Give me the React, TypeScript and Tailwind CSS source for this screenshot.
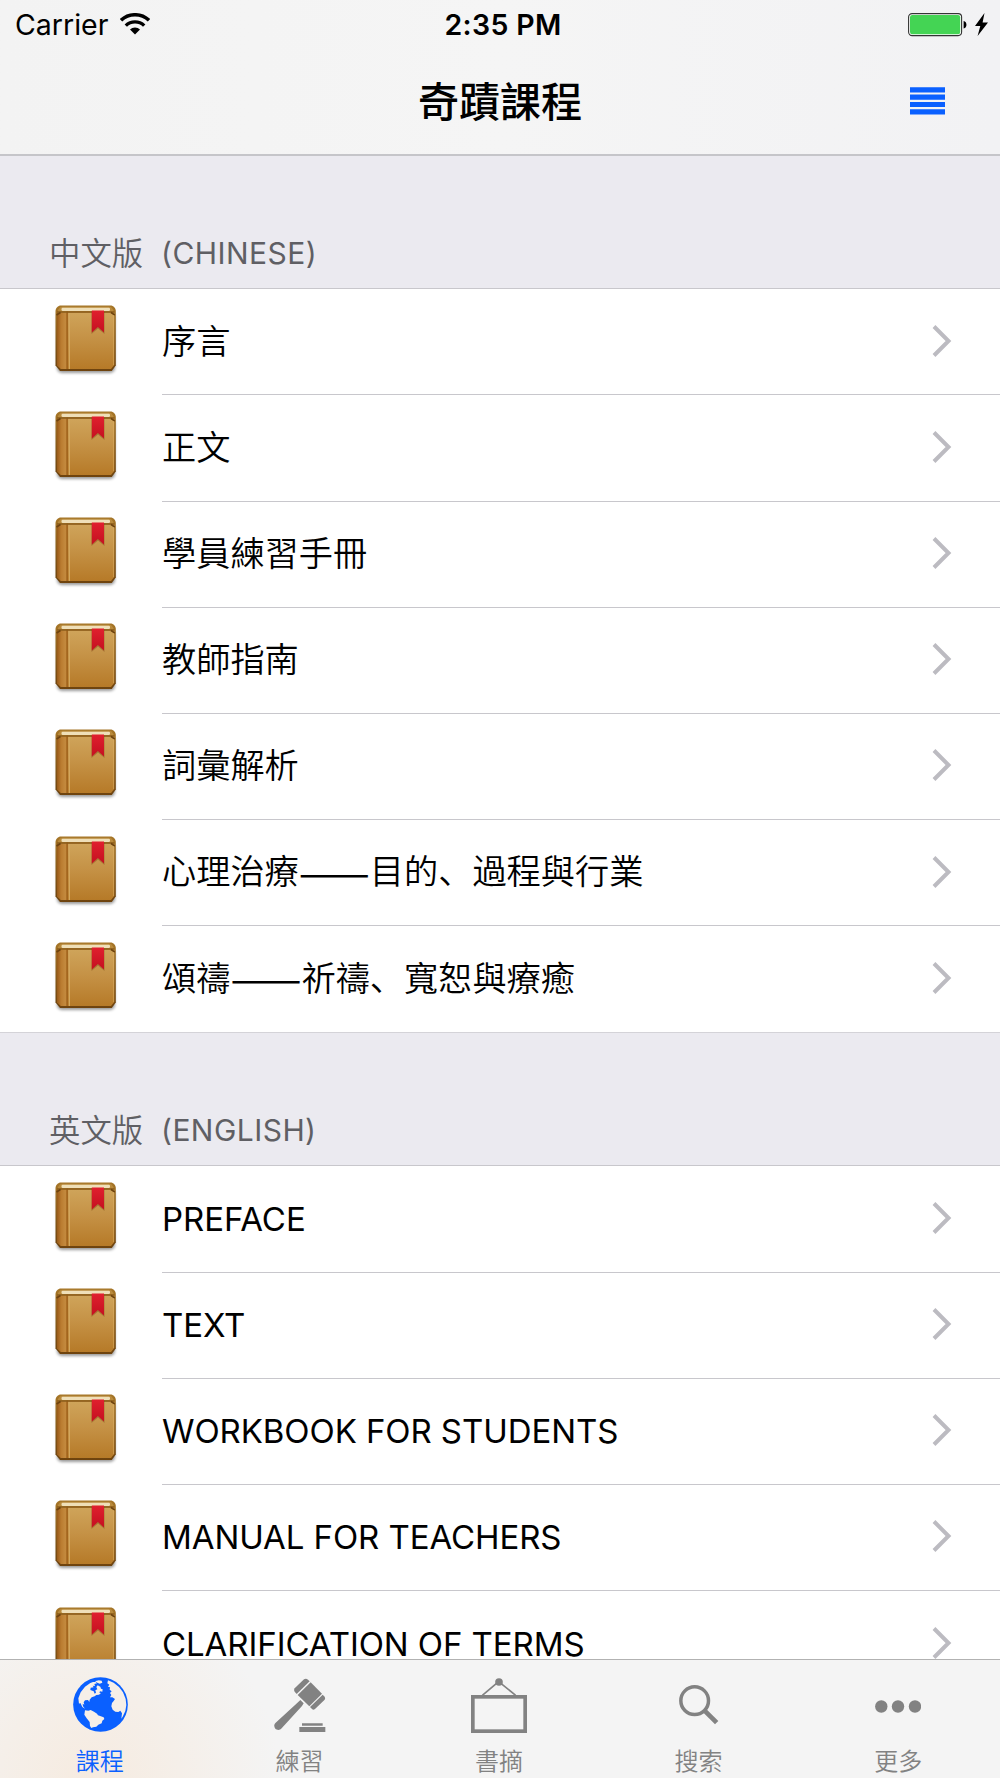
import type { ReactNode } from "react";

type Section = {
  title: string;
  suffix: string;
  latin?: boolean;
  rows: string[];
};

const sections: Section[] = [
  {
    title: "中文版",
    suffix: "(CHINESE)",
    rows: [
      "序言",
      "正文",
      "學員練習手冊",
      "教師指南",
      "詞彙解析",
      "心理治療——目的、過程與行業",
      "頌禱——祈禱、寬恕與療癒",
    ],
  },
  {
    title: "英文版",
    suffix: "(ENGLISH)",
    latin: true,
    rows: [
      "PREFACE",
      "TEXT",
      "WORKBOOK FOR STUDENTS",
      "MANUAL FOR TEACHERS",
      "CLARIFICATION OF TERMS",
    ],
  },
];

// Gradients shared by every book icon
function BookDefs() {
  return (
    <svg className="absolute h-0 w-0" aria-hidden="true">
      <defs>
        <linearGradient id="cover" x1="0" y1="0" x2="0" y2="1">
          <stop offset="0" stopColor="#cfa45a" />
          <stop offset="0.45" stopColor="#c59246" />
          <stop offset="1" stopColor="#b67a28" />
        </linearGradient>
        <linearGradient id="spine" x1="0" y1="0" x2="1" y2="0">
          <stop offset="0" stopColor="#995a18" />
          <stop offset="0.4" stopColor="#ba7c30" />
          <stop offset="0.8" stopColor="#c48a3e" />
          <stop offset="1" stopColor="#a76a20" />
        </linearGradient>
        <linearGradient id="edge" x1="0" y1="0" x2="0" y2="1">
          <stop offset="0" stopColor="#a67628" />
          <stop offset="1" stopColor="#6e430e" />
        </linearGradient>
        <linearGradient id="ribbon" x1="0" y1="0" x2="0" y2="1">
          <stop offset="0" stopColor="#e0202e" />
          <stop offset="1" stopColor="#c41020" />
        </linearGradient>
        <filter id="soft" x="-20%" y="-20%" width="140%" height="150%">
          <feGaussianBlur stdDeviation="1.5" />
        </filter>
      </defs>
    </svg>
  );
}

function Book() {
  return (
    <svg viewBox="0 0 64 72" className="h-[72px] w-16 shrink-0">
      <rect x="3" y="7" width="58" height="61" rx="5" fill="#000" opacity="0.4" filter="url(#soft)" />
      <path
        d="M7 .5h49.500c3 0 5.300 2.500 5.300 5.500v54.500l-4 5.500H6l-4.500-5.500V6c0-3 2.500-5.500 5.500-5.500Z"
        fill="url(#edge)"
      />
      <path d="M8 1.700h47.500c2 0 4.500 3 4.500 6H3.500c0-3 2.500-6 4.500-6Z" fill="#b98a3c" />
      <rect x="7.500" y="2.800" width="48.500" height="3.200" rx="1.200" fill="#efdfb8" />
      <path d="M3 7.500h57.300v52.500l-3.300 4H7l-4-4Z" fill="url(#cover)" />
      <path d="M3 7.500h10.500v56.500H7l-4-4Z" fill="url(#spine)" />
      <path d="M13.200 6.500v57.500" stroke="#a0621c" strokeWidth="1.300" />
      <path d="M15.400 8v56" stroke="#d3a75f" strokeWidth="1.200" />
      <path d="M3 7h57.300" stroke="#8a5a18" strokeWidth="1.500" />
      <path d="M2.500 10 6.500 7.500M60.800 10 57 7.500" stroke="#6e430e" strokeWidth="1.500" />
      <path d="M59.500 10v50" stroke="#ddb066" strokeWidth="0.800" opacity="0.600" />
      <path d="M37.500 6.500h13V29L44 23.400 37.500 29Z" fill="#6b3a08" opacity="0.350" />
      <path d="M37.800 5.500H50v22l-6.100-5.400-6.100 5.400Z" fill="url(#ribbon)" />
    </svg>
  );
}

function Chevron() {
  return (
    <svg viewBox="0 0 20 32" className="mr-12 mb-[2px] h-8 w-5 shrink-0" fill="none">
      <path d="M2 1.500 16.500 16 2 30.500" stroke="#bcbbc1" strokeWidth="4" />
    </svg>
  );
}

function StatusBar() {
  return (
    <div className="grid h-[51px] grid-cols-3 items-center pl-[15px] pr-3 font-['Inter',sans-serif] text-[28.5px] font-normal leading-none text-black">
      <div className="flex items-center gap-[12px]">
        <span>Carrier</span>
        <svg viewBox="0 0 30 22" className="-mt-[3px] h-[22px] w-[30px]" fill="none">
          <path d="M1 7.300a20.500 20.500 0 0 1 28 0" stroke="#000" strokeWidth="3.600" />
          <path d="M5.800 12.600a13.200 13.200 0 0 1 18.400 0" stroke="#000" strokeWidth="3.400" />
          <path d="M15 21.600 10 16.600a7 7 0 0 1 10 0Z" fill="#000" />
        </svg>
      </div>
      <span className="pl-[3px] text-center font-semibold tracking-[0.35px]">2:35 PM</span>
      <div className="flex items-center justify-end">
        <svg viewBox="0 0 80 24" className="-mt-px h-6 w-20">
          <rect x="0.600" y="0.600" width="53" height="22" rx="3.500" fill="#fff" stroke="#333" strokeWidth="1.100" />
          <rect x="2" y="2" width="50.200" height="19.200" rx="2.200" fill="#44d454" />
          <path d="M55.600 8c3.800 0.600 3.800 7 0 7.600Z" fill="#000" />
          <path d="M76.500 0 67 13h5.300L69.600 23 80 9.600h-5.400Z" fill="#000" />
        </svg>
      </div>
    </div>
  );
}

function MenuIcon() {
  return (
    <svg viewBox="0 0 35 28" className="mt-px h-7 w-[35px]" fill="#0a60ff">
      <path d="M0 .3h35v5.200H0ZM0 7.600h35v5.200H0ZM0 14.900h35v5.200H0ZM0 22.200h35v5.200H0Z" />
    </svg>
  );
}

function NavBar() {
  return (
    <header className="h-[156px] shrink-0 border-b-2 border-[#c5c5c9] bg-gradient-to-r from-[#f3f3f3] via-[#f5f5f5] to-[#f2f2f4]">
      <StatusBar />
      <div className="grid h-[98px] grid-cols-3 items-center px-[55px]">
        <h1 className="col-start-2 -mt-[2px] text-center text-[41px] font-medium leading-none text-black">
          奇蹟課程
        </h1>
        <div className="flex justify-end">
          <MenuIcon />
        </div>
      </div>
    </header>
  );
}

function RowLabel({ text }: { text: string }) {
  const [before, after] = text.split("——");
  return (
    <span className="flex flex-1 items-center whitespace-nowrap pb-[6px] text-[34.2px] leading-none text-black">
      {before}
      {after && <span className="text-[42.5px] leading-[34px]">——</span>}
      {after}
    </span>
  );
}

function ListSection({ title, suffix, latin, rows }: Section) {
  return (
    <section>
      <h2 className="flex h-[133.25px] items-end border-b border-[#c8c7cc] bg-[#ebeaf0] pb-[19px] pl-[49px] text-[#5f5f64]">
        <span className="mb-px w-[112px] text-[31.4px] leading-8">{title}</span>
        <span className="font-['Inter',sans-serif] text-[30px] font-normal leading-8 tracking-[0.45px]">
          {suffix}
        </span>
      </h2>
      <ul className="border-b border-[#d4d3d8] bg-white">
        {rows.map((row) => (
          <li key={row} className="group flex h-[106.15px] items-center pl-[54px]">
            <div className="-mt-[3px] flex w-[108px] items-center">
              <Book />
            </div>
            <div className="flex h-full flex-1 items-center border-b border-[#c8c7cc] group-last:border-b-0">
              {latin ? (
                <span className="flex-1 whitespace-nowrap font-['Inter',sans-serif] text-[33px] font-normal leading-none tracking-[-0.08px] text-black">
                  {row}
                </span>
              ) : (
                <RowLabel text={row} />
              )}
              <Chevron />
            </div>
          </li>
        ))}
      </ul>
    </section>
  );
}

function GlobeIcon() {
  return (
    <svg viewBox="0 0 165 165" className="ml-[2px] mb-px h-[55px] w-[55px]">
      <circle cx="82.500" cy="82.500" r="82" fill="#0a60ff" />
      <g fill="#f6efe8">
        <path d="M16 64 23 46 36 29 52 18 60 15 68 15 72 19 64 21 66 27 59 26 62 31 53 32 52 39 62 43 65 50 69 47 67 40 73 37 70 30 74 25 82 29 84 35 89 37 88 44 81 43 79 47 84 48 78 53 70 54 65 58 56 61 50 68 49 75 45 69 36 70 32 76 34 83 29 80 30 88 36 95 28 90 22 78 18 80Z" />
        <path d="M66 13 77 10 86 11 88 17 80 20 73 17Z" />
        <path d="M105 10 122 17 138 30 150 46 158 66 160 84 157 102 149 119 145 125 147 109 142 101 136 105 127 104 119 98 115 88 117 78 122 72 126 66 118 61 111 61 115 54 111 48 116 43 110 38 111 31 105 29 109 23 103 19Z" />
        <path d="M36 100 46 101 53 99 63 104 72 110 75 115 92 121 94 126 88 131 86 139 76 143 70 149 60 151 55 153 51 147 50 135 41 124 34 113Z" />
      </g>
    </svg>
  );
}

function GavelIcon() {
  return (
    <svg viewBox="74 84 156 165" className="ml-px h-[55px] w-[52px]" fill="#828282">
      <path d="M164 88q6-4 12 1l5 5-39 38-6-7q-4-5 0-10Z" />
      <path d="M184 97 218 131 180 169 145 135Z" />
      <path d="m220 134 6 6q3 5 0 9l-29 28q-5 4-9 0l-6-6Z" />
      <path d="m153 150 10 10-5 8-61 67c-6 7-15 5-19 1-4-5-5-12 1-18l67-61Z" />
      <path d="M158 220h62v7h-62ZM150 231h78v15h-78Z" />
    </svg>
  );
}

function FrameIcon() {
  return (
    <svg viewBox="0 0 168 165" className="h-[55px] w-14" fill="none" stroke="#828282">
      <rect x="5.500" y="56.500" width="157" height="103" strokeWidth="11" />
      <path d="M34 52 83 11l51 41" strokeWidth="5" />
      <circle cx="84" cy="12" r="11.500" fill="#828282" stroke="none" />
    </svg>
  );
}

function SearchIcon() {
  return (
    <svg viewBox="0 0 120 120" className="h-10 w-10" fill="none" stroke="#828282">
      <circle cx="47" cy="47" r="41.500" strokeWidth="10.500" />
      <path d="m76 76 37 37" strokeWidth="14" />
    </svg>
  );
}

function MoreIcon() {
  return (
    <svg viewBox="0 0 46 13" className="mt-[2px] h-[13px] w-[46px]" fill="#828282">
      <circle cx="6.300" cy="6.500" r="6.200" />
      <circle cx="23" cy="6.500" r="6.200" />
      <circle cx="40" cy="6.500" r="6.200" />
    </svg>
  );
}

const tabs: { label: string; icon: ReactNode; active?: boolean }[] = [
  { label: "課程", icon: <GlobeIcon />, active: true },
  { label: "練習", icon: <GavelIcon /> },
  { label: "書摘", icon: <FrameIcon /> },
  { label: "搜索", icon: <SearchIcon /> },
  { label: "更多", icon: <MoreIcon /> },
];

function TabBar() {
  return (
    <nav className="grid h-[119px] shrink-0 grid-cols-5 border-t border-[#b2b2b2] bg-[#f4f4f4] bg-[radial-gradient(circle_at_90px_120px,#f6ebe0_0px,#f5efe9_90px,#f4f4f4_190px)] pr-0.5">
      {tabs.map((tab) => (
        <div key={tab.label} className="flex flex-col items-center">
          <div className="flex h-[90px] items-center justify-center">{tab.icon}</div>
          <span
            className={
              tab.active
                ? "-mt-px text-[24px] leading-[22px] text-[#0a60ff]"
                : "-mt-px text-[24px] leading-[22px] text-[#828282]"
            }
          >
            {tab.label}
          </span>
        </div>
      ))}
    </nav>
  );
}

export default function App() {
  return (
    <div className="flex h-[1778px] w-[1000px] flex-col overflow-hidden bg-[#ebeaf0] font-['Noto_Sans_CJK_SC',sans-serif] [font-weight:350]">
      <BookDefs />
      <NavBar />
      <main className="min-h-0 flex-1 overflow-hidden">
        {sections.map((section) => (
          <ListSection key={section.title} {...section} />
        ))}
      </main>
      <TabBar />
    </div>
  );
}
